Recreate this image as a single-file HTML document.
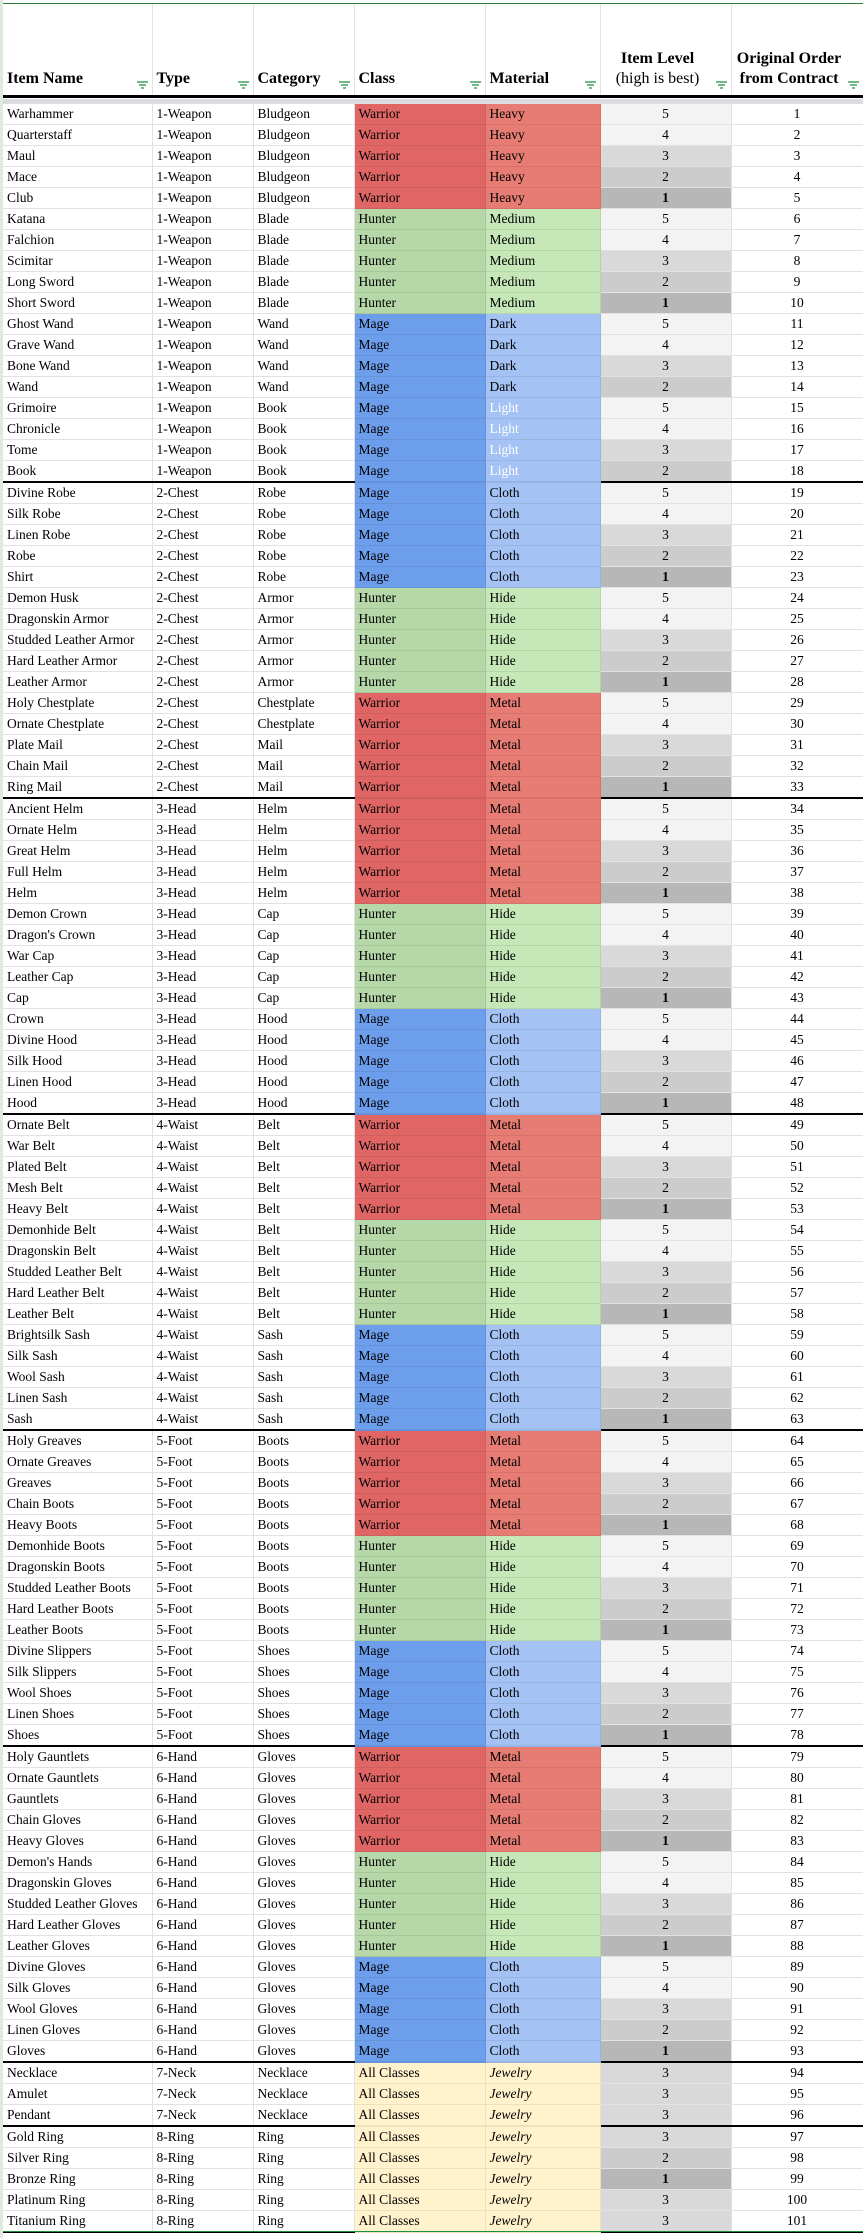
<!DOCTYPE html>
<html><head><meta charset="utf-8">
<style>
html,body{margin:0;padding:0;background:#fff;width:863px;height:2238px;overflow:hidden;font-family:"Liberation Serif",serif;color:#000}
.strip{position:absolute;left:0;top:0;width:3px;height:2238px;background:#dfeadf}
.topl{position:absolute;left:3px;top:0;width:860px;height:3px;border-bottom:1px solid #2e7d32}
table{position:absolute;left:3px;border-collapse:collapse;table-layout:fixed;width:860px}
td{padding:0 0 0 4px;white-space:nowrap;overflow:hidden;border-right:1px solid #e2e2e2;border-bottom:1px solid #e2e2e2;height:20px;font-size:13.5px;line-height:20px;box-sizing:border-box}
#h{top:4px}
#h td{height:92px;vertical-align:bottom;font-weight:bold;font-size:16px;line-height:20px;padding-bottom:6px;position:relative;border-bottom:3px solid #000}
#h td.c{text-align:center;padding-right:16px}
#h td span{font-weight:normal}
.f{position:absolute;right:4px;bottom:6px;width:11px;height:8px}
.band{position:absolute;left:3px;top:99px;width:860px;height:5px;background:#dadce0}
#b{top:104px}
td:nth-child(6),td:nth-child(7){text-align:center;padding:0}
tr.w td:nth-child(4){background:#e06666;border-color:#cf5f5f}
tr.w td:nth-child(5){background:#e67c73;border-color:#d77169}
tr.h td:nth-child(4){background:#b6d7a8;border-color:#a7c79a}
tr.h td:nth-child(5){background:#c6e8b9;border-color:#b5d7a8}
tr.m td:nth-child(4){background:#6d9eeb;border-color:#6593da}
tr.m td:nth-child(5){background:#a4c2f4;border-color:#97b4e3}
tr.j td:nth-child(4),tr.j td:nth-child(5){background:#fff2cc;border-color:#ede0bd}
tr.j td:nth-child(5){font-style:italic}
tr.lt td:nth-child(5){color:#fff}
td.a{background:#f3f3f3}td.b{background:#f3f3f3}td.c3{background:#d9d9d9}td.d{background:#cccccc}td.e{background:#b7b7b7;font-weight:bold}
tr.s td{border-bottom:2px solid #000}
tr.z td{border-bottom:2px solid #000}
.gl{position:absolute;left:3px;top:2231px;width:860px;height:1px;background:#1e8e3e}
</style></head><body>
<div class="strip"></div><div class="topl"></div>
<table id="h"><colgroup><col style="width:149px"><col style="width:101px"><col style="width:101px"><col style="width:131px"><col style="width:115px"><col style="width:131px"><col style="width:132px"></colgroup>
<tr><td>Item Name<svg class="f" viewBox="0 0 11 8"><path d="M0 1H11M2 4H9M4 7H7" stroke="#1e8e3e" stroke-width="1.3"/></svg></td><td>Type<svg class="f" viewBox="0 0 11 8"><path d="M0 1H11M2 4H9M4 7H7" stroke="#1e8e3e" stroke-width="1.3"/></svg></td><td>Category<svg class="f" viewBox="0 0 11 8"><path d="M0 1H11M2 4H9M4 7H7" stroke="#1e8e3e" stroke-width="1.3"/></svg></td><td>Class<svg class="f" viewBox="0 0 11 8"><path d="M0 1H11M2 4H9M4 7H7" stroke="#1e8e3e" stroke-width="1.3"/></svg></td><td>Material<svg class="f" viewBox="0 0 11 8"><path d="M0 1H11M2 4H9M4 7H7" stroke="#1e8e3e" stroke-width="1.3"/></svg></td><td class="c">Item Level<br><span>(high is best)</span><svg class="f" viewBox="0 0 11 8"><path d="M0 1H11M2 4H9M4 7H7" stroke="#1e8e3e" stroke-width="1.3"/></svg></td><td class="c">Original Order<br>from Contract<svg class="f" viewBox="0 0 11 8"><path d="M0 1H11M2 4H9M4 7H7" stroke="#1e8e3e" stroke-width="1.3"/></svg></td></tr>
</table>
<div class="band"></div>
<table id="b"><colgroup><col style="width:149px"><col style="width:101px"><col style="width:101px"><col style="width:131px"><col style="width:115px"><col style="width:131px"><col style="width:132px"></colgroup>
<tr class="w"><td>Warhammer<td>1-Weapon<td>Bludgeon<td>Warrior<td>Heavy<td class="a">5<td>1</tr>
<tr class="w"><td>Quarterstaff<td>1-Weapon<td>Bludgeon<td>Warrior<td>Heavy<td class="b">4<td>2</tr>
<tr class="w"><td>Maul<td>1-Weapon<td>Bludgeon<td>Warrior<td>Heavy<td class="c3">3<td>3</tr>
<tr class="w"><td>Mace<td>1-Weapon<td>Bludgeon<td>Warrior<td>Heavy<td class="d">2<td>4</tr>
<tr class="w"><td>Club<td>1-Weapon<td>Bludgeon<td>Warrior<td>Heavy<td class="e">1<td>5</tr>
<tr class="h"><td>Katana<td>1-Weapon<td>Blade<td>Hunter<td>Medium<td class="a">5<td>6</tr>
<tr class="h"><td>Falchion<td>1-Weapon<td>Blade<td>Hunter<td>Medium<td class="b">4<td>7</tr>
<tr class="h"><td>Scimitar<td>1-Weapon<td>Blade<td>Hunter<td>Medium<td class="c3">3<td>8</tr>
<tr class="h"><td>Long Sword<td>1-Weapon<td>Blade<td>Hunter<td>Medium<td class="d">2<td>9</tr>
<tr class="h"><td>Short Sword<td>1-Weapon<td>Blade<td>Hunter<td>Medium<td class="e">1<td>10</tr>
<tr class="m"><td>Ghost Wand<td>1-Weapon<td>Wand<td>Mage<td>Dark<td class="a">5<td>11</tr>
<tr class="m"><td>Grave Wand<td>1-Weapon<td>Wand<td>Mage<td>Dark<td class="b">4<td>12</tr>
<tr class="m"><td>Bone Wand<td>1-Weapon<td>Wand<td>Mage<td>Dark<td class="c3">3<td>13</tr>
<tr class="m"><td>Wand<td>1-Weapon<td>Wand<td>Mage<td>Dark<td class="d">2<td>14</tr>
<tr class="m lt"><td>Grimoire<td>1-Weapon<td>Book<td>Mage<td>Light<td class="a">5<td>15</tr>
<tr class="m lt"><td>Chronicle<td>1-Weapon<td>Book<td>Mage<td>Light<td class="b">4<td>16</tr>
<tr class="m lt"><td>Tome<td>1-Weapon<td>Book<td>Mage<td>Light<td class="c3">3<td>17</tr>
<tr class="m lt s"><td>Book<td>1-Weapon<td>Book<td>Mage<td>Light<td class="d">2<td>18</tr>
<tr class="m"><td>Divine Robe<td>2-Chest<td>Robe<td>Mage<td>Cloth<td class="a">5<td>19</tr>
<tr class="m"><td>Silk Robe<td>2-Chest<td>Robe<td>Mage<td>Cloth<td class="b">4<td>20</tr>
<tr class="m"><td>Linen Robe<td>2-Chest<td>Robe<td>Mage<td>Cloth<td class="c3">3<td>21</tr>
<tr class="m"><td>Robe<td>2-Chest<td>Robe<td>Mage<td>Cloth<td class="d">2<td>22</tr>
<tr class="m"><td>Shirt<td>2-Chest<td>Robe<td>Mage<td>Cloth<td class="e">1<td>23</tr>
<tr class="h"><td>Demon Husk<td>2-Chest<td>Armor<td>Hunter<td>Hide<td class="a">5<td>24</tr>
<tr class="h"><td>Dragonskin Armor<td>2-Chest<td>Armor<td>Hunter<td>Hide<td class="b">4<td>25</tr>
<tr class="h"><td>Studded Leather Armor<td>2-Chest<td>Armor<td>Hunter<td>Hide<td class="c3">3<td>26</tr>
<tr class="h"><td>Hard Leather Armor<td>2-Chest<td>Armor<td>Hunter<td>Hide<td class="d">2<td>27</tr>
<tr class="h"><td>Leather Armor<td>2-Chest<td>Armor<td>Hunter<td>Hide<td class="e">1<td>28</tr>
<tr class="w"><td>Holy Chestplate<td>2-Chest<td>Chestplate<td>Warrior<td>Metal<td class="a">5<td>29</tr>
<tr class="w"><td>Ornate Chestplate<td>2-Chest<td>Chestplate<td>Warrior<td>Metal<td class="b">4<td>30</tr>
<tr class="w"><td>Plate Mail<td>2-Chest<td>Mail<td>Warrior<td>Metal<td class="c3">3<td>31</tr>
<tr class="w"><td>Chain Mail<td>2-Chest<td>Mail<td>Warrior<td>Metal<td class="d">2<td>32</tr>
<tr class="w s"><td>Ring Mail<td>2-Chest<td>Mail<td>Warrior<td>Metal<td class="e">1<td>33</tr>
<tr class="w"><td>Ancient Helm<td>3-Head<td>Helm<td>Warrior<td>Metal<td class="a">5<td>34</tr>
<tr class="w"><td>Ornate Helm<td>3-Head<td>Helm<td>Warrior<td>Metal<td class="b">4<td>35</tr>
<tr class="w"><td>Great Helm<td>3-Head<td>Helm<td>Warrior<td>Metal<td class="c3">3<td>36</tr>
<tr class="w"><td>Full Helm<td>3-Head<td>Helm<td>Warrior<td>Metal<td class="d">2<td>37</tr>
<tr class="w"><td>Helm<td>3-Head<td>Helm<td>Warrior<td>Metal<td class="e">1<td>38</tr>
<tr class="h"><td>Demon Crown<td>3-Head<td>Cap<td>Hunter<td>Hide<td class="a">5<td>39</tr>
<tr class="h"><td>Dragon's Crown<td>3-Head<td>Cap<td>Hunter<td>Hide<td class="b">4<td>40</tr>
<tr class="h"><td>War Cap<td>3-Head<td>Cap<td>Hunter<td>Hide<td class="c3">3<td>41</tr>
<tr class="h"><td>Leather Cap<td>3-Head<td>Cap<td>Hunter<td>Hide<td class="d">2<td>42</tr>
<tr class="h"><td>Cap<td>3-Head<td>Cap<td>Hunter<td>Hide<td class="e">1<td>43</tr>
<tr class="m"><td>Crown<td>3-Head<td>Hood<td>Mage<td>Cloth<td class="a">5<td>44</tr>
<tr class="m"><td>Divine Hood<td>3-Head<td>Hood<td>Mage<td>Cloth<td class="b">4<td>45</tr>
<tr class="m"><td>Silk Hood<td>3-Head<td>Hood<td>Mage<td>Cloth<td class="c3">3<td>46</tr>
<tr class="m"><td>Linen Hood<td>3-Head<td>Hood<td>Mage<td>Cloth<td class="d">2<td>47</tr>
<tr class="m s"><td>Hood<td>3-Head<td>Hood<td>Mage<td>Cloth<td class="e">1<td>48</tr>
<tr class="w"><td>Ornate Belt<td>4-Waist<td>Belt<td>Warrior<td>Metal<td class="a">5<td>49</tr>
<tr class="w"><td>War Belt<td>4-Waist<td>Belt<td>Warrior<td>Metal<td class="b">4<td>50</tr>
<tr class="w"><td>Plated Belt<td>4-Waist<td>Belt<td>Warrior<td>Metal<td class="c3">3<td>51</tr>
<tr class="w"><td>Mesh Belt<td>4-Waist<td>Belt<td>Warrior<td>Metal<td class="d">2<td>52</tr>
<tr class="w"><td>Heavy Belt<td>4-Waist<td>Belt<td>Warrior<td>Metal<td class="e">1<td>53</tr>
<tr class="h"><td>Demonhide Belt<td>4-Waist<td>Belt<td>Hunter<td>Hide<td class="a">5<td>54</tr>
<tr class="h"><td>Dragonskin Belt<td>4-Waist<td>Belt<td>Hunter<td>Hide<td class="b">4<td>55</tr>
<tr class="h"><td>Studded Leather Belt<td>4-Waist<td>Belt<td>Hunter<td>Hide<td class="c3">3<td>56</tr>
<tr class="h"><td>Hard Leather Belt<td>4-Waist<td>Belt<td>Hunter<td>Hide<td class="d">2<td>57</tr>
<tr class="h"><td>Leather Belt<td>4-Waist<td>Belt<td>Hunter<td>Hide<td class="e">1<td>58</tr>
<tr class="m"><td>Brightsilk Sash<td>4-Waist<td>Sash<td>Mage<td>Cloth<td class="a">5<td>59</tr>
<tr class="m"><td>Silk Sash<td>4-Waist<td>Sash<td>Mage<td>Cloth<td class="b">4<td>60</tr>
<tr class="m"><td>Wool Sash<td>4-Waist<td>Sash<td>Mage<td>Cloth<td class="c3">3<td>61</tr>
<tr class="m"><td>Linen Sash<td>4-Waist<td>Sash<td>Mage<td>Cloth<td class="d">2<td>62</tr>
<tr class="m s"><td>Sash<td>4-Waist<td>Sash<td>Mage<td>Cloth<td class="e">1<td>63</tr>
<tr class="w"><td>Holy Greaves<td>5-Foot<td>Boots<td>Warrior<td>Metal<td class="a">5<td>64</tr>
<tr class="w"><td>Ornate Greaves<td>5-Foot<td>Boots<td>Warrior<td>Metal<td class="b">4<td>65</tr>
<tr class="w"><td>Greaves<td>5-Foot<td>Boots<td>Warrior<td>Metal<td class="c3">3<td>66</tr>
<tr class="w"><td>Chain Boots<td>5-Foot<td>Boots<td>Warrior<td>Metal<td class="d">2<td>67</tr>
<tr class="w"><td>Heavy Boots<td>5-Foot<td>Boots<td>Warrior<td>Metal<td class="e">1<td>68</tr>
<tr class="h"><td>Demonhide Boots<td>5-Foot<td>Boots<td>Hunter<td>Hide<td class="a">5<td>69</tr>
<tr class="h"><td>Dragonskin Boots<td>5-Foot<td>Boots<td>Hunter<td>Hide<td class="b">4<td>70</tr>
<tr class="h"><td>Studded Leather Boots<td>5-Foot<td>Boots<td>Hunter<td>Hide<td class="c3">3<td>71</tr>
<tr class="h"><td>Hard Leather Boots<td>5-Foot<td>Boots<td>Hunter<td>Hide<td class="d">2<td>72</tr>
<tr class="h"><td>Leather Boots<td>5-Foot<td>Boots<td>Hunter<td>Hide<td class="e">1<td>73</tr>
<tr class="m"><td>Divine Slippers<td>5-Foot<td>Shoes<td>Mage<td>Cloth<td class="a">5<td>74</tr>
<tr class="m"><td>Silk Slippers<td>5-Foot<td>Shoes<td>Mage<td>Cloth<td class="b">4<td>75</tr>
<tr class="m"><td>Wool Shoes<td>5-Foot<td>Shoes<td>Mage<td>Cloth<td class="c3">3<td>76</tr>
<tr class="m"><td>Linen Shoes<td>5-Foot<td>Shoes<td>Mage<td>Cloth<td class="d">2<td>77</tr>
<tr class="m s"><td>Shoes<td>5-Foot<td>Shoes<td>Mage<td>Cloth<td class="e">1<td>78</tr>
<tr class="w"><td>Holy Gauntlets<td>6-Hand<td>Gloves<td>Warrior<td>Metal<td class="a">5<td>79</tr>
<tr class="w"><td>Ornate Gauntlets<td>6-Hand<td>Gloves<td>Warrior<td>Metal<td class="b">4<td>80</tr>
<tr class="w"><td>Gauntlets<td>6-Hand<td>Gloves<td>Warrior<td>Metal<td class="c3">3<td>81</tr>
<tr class="w"><td>Chain Gloves<td>6-Hand<td>Gloves<td>Warrior<td>Metal<td class="d">2<td>82</tr>
<tr class="w"><td>Heavy Gloves<td>6-Hand<td>Gloves<td>Warrior<td>Metal<td class="e">1<td>83</tr>
<tr class="h"><td>Demon's Hands<td>6-Hand<td>Gloves<td>Hunter<td>Hide<td class="a">5<td>84</tr>
<tr class="h"><td>Dragonskin Gloves<td>6-Hand<td>Gloves<td>Hunter<td>Hide<td class="b">4<td>85</tr>
<tr class="h"><td>Studded Leather Gloves<td>6-Hand<td>Gloves<td>Hunter<td>Hide<td class="c3">3<td>86</tr>
<tr class="h"><td>Hard Leather Gloves<td>6-Hand<td>Gloves<td>Hunter<td>Hide<td class="d">2<td>87</tr>
<tr class="h"><td>Leather Gloves<td>6-Hand<td>Gloves<td>Hunter<td>Hide<td class="e">1<td>88</tr>
<tr class="m"><td>Divine Gloves<td>6-Hand<td>Gloves<td>Mage<td>Cloth<td class="a">5<td>89</tr>
<tr class="m"><td>Silk Gloves<td>6-Hand<td>Gloves<td>Mage<td>Cloth<td class="b">4<td>90</tr>
<tr class="m"><td>Wool Gloves<td>6-Hand<td>Gloves<td>Mage<td>Cloth<td class="c3">3<td>91</tr>
<tr class="m"><td>Linen Gloves<td>6-Hand<td>Gloves<td>Mage<td>Cloth<td class="d">2<td>92</tr>
<tr class="m s"><td>Gloves<td>6-Hand<td>Gloves<td>Mage<td>Cloth<td class="e">1<td>93</tr>
<tr class="j"><td>Necklace<td>7-Neck<td>Necklace<td>All Classes<td>Jewelry<td class="c3">3<td>94</tr>
<tr class="j"><td>Amulet<td>7-Neck<td>Necklace<td>All Classes<td>Jewelry<td class="c3">3<td>95</tr>
<tr class="j s"><td>Pendant<td>7-Neck<td>Necklace<td>All Classes<td>Jewelry<td class="c3">3<td>96</tr>
<tr class="j"><td>Gold Ring<td>8-Ring<td>Ring<td>All Classes<td>Jewelry<td class="c3">3<td>97</tr>
<tr class="j"><td>Silver Ring<td>8-Ring<td>Ring<td>All Classes<td>Jewelry<td class="d">2<td>98</tr>
<tr class="j"><td>Bronze Ring<td>8-Ring<td>Ring<td>All Classes<td>Jewelry<td class="e">1<td>99</tr>
<tr class="j"><td>Platinum Ring<td>8-Ring<td>Ring<td>All Classes<td>Jewelry<td class="c3">3<td>100</tr>
<tr class="j z"><td>Titanium Ring<td>8-Ring<td>Ring<td>All Classes<td>Jewelry<td class="c3">3<td>101</tr>
</table>
<div class="gl"></div>
</body></html>
